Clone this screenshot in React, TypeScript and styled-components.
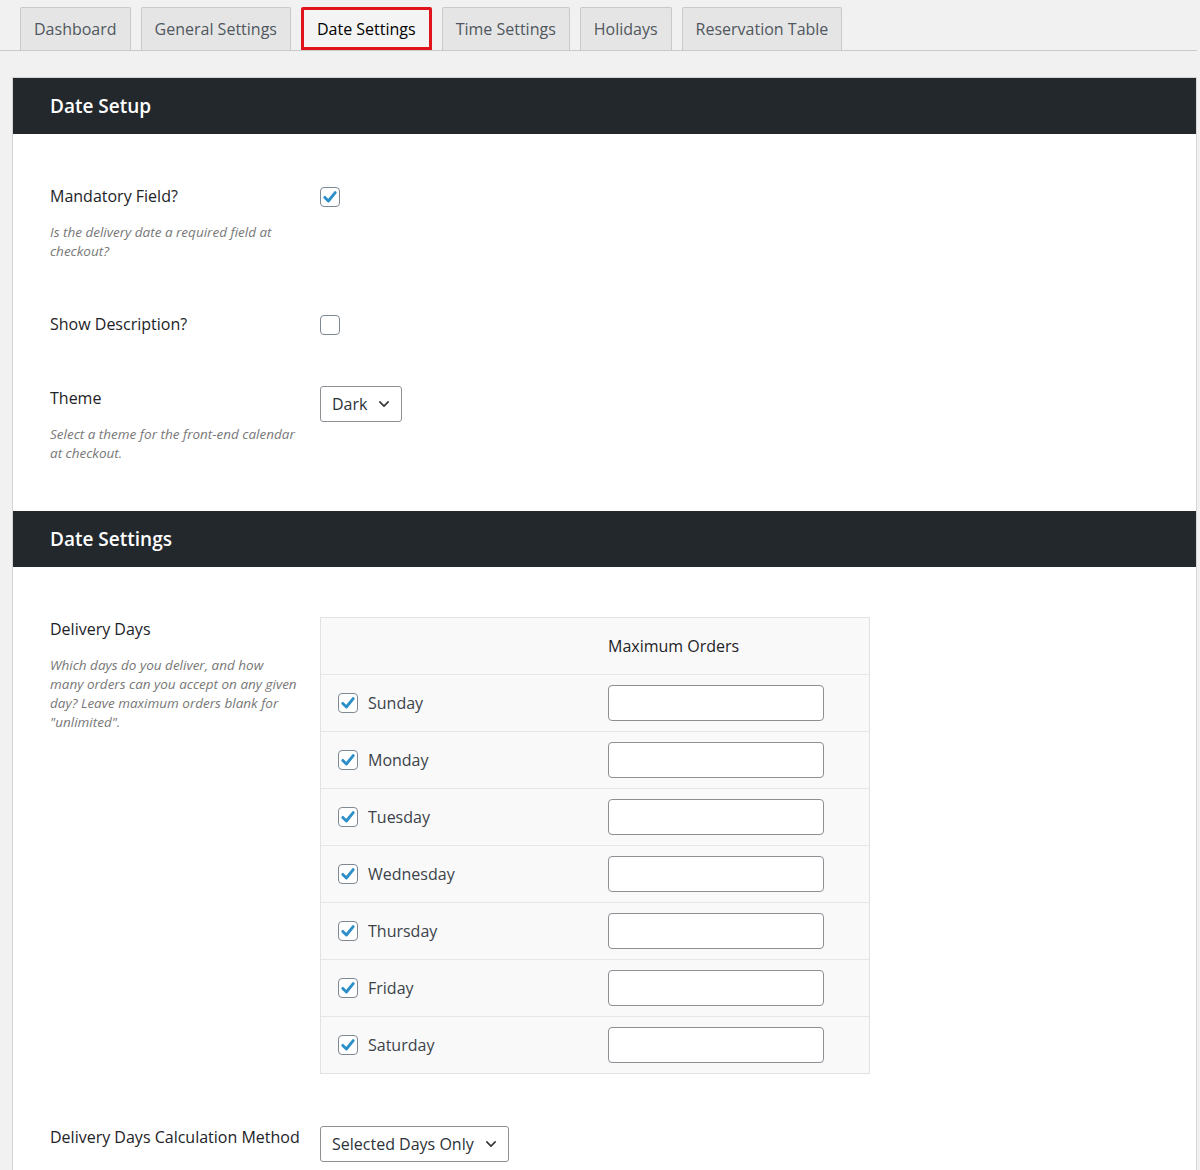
import React from "react";
import styled, { createGlobalStyle } from "styled-components";

const GlobalStyle = createGlobalStyle`
  body {
    margin: 0;
    background: #f1f1f1;
    font-family: "Open Sans", "Noto Sans", sans-serif;
    color: #23282d;
  }
`;

const tabs = ["Dashboard", "General Settings", "Date Settings", "Time Settings", "Holidays", "Reservation Table"];
const days = ["Sunday", "Monday", "Tuesday", "Wednesday", "Thursday", "Friday", "Saturday"];

const Check: React.FC<{ checked?: boolean; size?: number }> = ({ checked, size = 20 }) => (
  <CheckBox $size={size}>
    {checked && (
      <svg width={size - 4} height={size - 4} viewBox="0 0 20 20">
        <path d="M3.5 10.5 L8 15 L16.5 4.5" fill="none" stroke="#2c8fc7" strokeWidth="3.6" strokeLinecap="round" strokeLinejoin="round" />
      </svg>
    )}
  </CheckBox>
);

const Chevron = () => (
  <svg width="14" height="14" viewBox="0 0 20 20">
    <path d="M4 7 L10 13 L16 7" fill="none" stroke="#333" strokeWidth="2.2" strokeLinecap="round" strokeLinejoin="round" />
  </svg>
);

const App: React.FC = () => (
  <>
    <GlobalStyle />
    <TabBar>
      {tabs.map((t) => (
        <Tab key={t} $active={t === "Date Settings"}>{t}</Tab>
      ))}
    </TabBar>
    <Panel>
      <Header>Date Setup</Header>
      <Section>
        <Row>
          <LabelCol>
            <Label>Mandatory Field?</Label>
            <Desc>Is the delivery date a required field at checkout?</Desc>
          </LabelCol>
          <Control $offset={2}><Check checked /></Control>
        </Row>
        <Row>
          <LabelCol><Label>Show Description?</Label></LabelCol>
          <Control $offset={2}><Check /></Control>
        </Row>
        <Row>
          <LabelCol>
            <Label>Theme</Label>
            <Desc>Select a theme for the front-end calendar at checkout.</Desc>
          </LabelCol>
          <Control $offset={-1}><Select>Dark <Chevron /></Select></Control>
        </Row>
      </Section>
      <Header>Date Settings</Header>
      <Section>
        <Row>
          <LabelCol>
            <Label>Delivery Days</Label>
            <Desc>Which days do you deliver, and how many orders can you accept on any given day? Leave maximum orders blank for "unlimited".</Desc>
          </LabelCol>
          <Control $offset={-1}>
            <DaysTable>
              <TableHead>
                <span />
                <HeadCell>Maximum Orders</HeadCell>
              </TableHead>
              {days.map((d) => (
                <DayRow key={d}>
                  <DayName><Check checked />{d}</DayName>
                  <NumInput />
                </DayRow>
              ))}
            </DaysTable>
          </Control>
        </Row>
        <Row>
          <LabelCol><Label>Delivery Days Calculation Method</Label></LabelCol>
          <Control $offset={0}><Select>Selected Days Only <Chevron /></Select></Control>
        </Row>
      </Section>
    </Panel>
  </>
);

const TabBar = styled.div`
  display: flex;
  gap: 10px;
  padding: 7px 0 0 20px;
  margin-right: 3px;
  border-bottom: 1px solid #c9c9c9;
`;

const Tab = styled.div<{ $active?: boolean }>`
  height: 43px;
  box-sizing: border-box;
  padding: 0 13px;
  display: flex;
  align-items: center;
  font-size: 16px;
  color: ${(p) => (p.$active ? "#000" : "#50575e")};
  background: ${(p) => (p.$active ? "#f4f4f4" : "#e5e5e5")};
  border: ${(p) => (p.$active ? "3px solid #e0141c" : "1px solid #c9c9c9")};
  border-bottom: ${(p) => (p.$active ? "3px solid #e0141c" : "none")};
  border-radius: 2px 2px 0 0;
  margin-bottom: ${(p) => (p.$active ? "-1px" : "0")};
`;

const Panel = styled.div`
  margin: 26px 3px 0 12px;
  background: #fff;
  border: 1px solid #d5d5d5;
  border-bottom: none;
`;

const Header = styled.div`
  background: #23282d;
  color: #fff;
  height: 56px;
  display: flex;
  align-items: center;
  padding-left: 37px;
  font-size: 19px;
  font-weight: 600;
`;

const Section = styled.div`
  padding: 51px 0 48px 37px;
  display: flex;
  flex-direction: column;
  gap: 52px;
`;

const Row = styled.div`
  display: flex;
`;

const LabelCol = styled.div`
  width: 270px;
  flex-shrink: 0;
`;

const Label = styled.div`
  font-size: 16px;
  font-weight: 500;
  line-height: 22px;
  color: #1d2327;
  padding-right: 20px;
`;

const Desc = styled.div`
  margin-top: 16px;
  font-size: 13.5px;
  font-style: italic;
  color: #777;
  line-height: 19px;
  padding-right: 22px;
`;

const Control = styled.div<{ $offset?: number }>`
  margin-top: ${(p) => p.$offset ?? 0}px;
`;

const CheckBox = styled.div<{ $size: number }>`
  width: ${(p) => p.$size}px;
  height: ${(p) => p.$size}px;
  box-sizing: border-box;
  border: 1.5px solid #7e8993;
  border-radius: 4px;
  background: #fff;
  display: flex;
  align-items: center;
  justify-content: center;
  flex-shrink: 0;
`;

const Select = styled.div`
  display: inline-flex;
  align-items: center;
  gap: 10px;
  height: 36px;
  box-sizing: border-box;
  padding: 0 10px 0 11px;
  border: 1px solid #8c8f94;
  border-radius: 3px;
  font-size: 16px;
  color: #2c3338;
  background: #fff;
`;

const DaysTable = styled.div`
  width: 548px;
  background: #f9f9f9;
  border: 1px solid #e2e2e2;
`;

const TableHead = styled.div`
  display: grid;
  grid-template-columns: 287px 1fr;
  height: 56px;
  align-items: center;
  border-bottom: 1px solid #e6e6e6;
`;

const HeadCell = styled.div`
  font-size: 16px;
  font-weight: 500;
  color: #1d2327;
`;

const DayRow = styled.div`
  display: grid;
  grid-template-columns: 287px 216px;
  height: 56px;
  align-items: center;
  border-bottom: 1px solid #e6e6e6;
  &:last-child {
    border-bottom: none;
  }
`;

const DayName = styled.div`
  display: flex;
  align-items: center;
  gap: 10px;
  padding-left: 17px;
  font-size: 16px;
  color: #3c434a;
`;

const NumInput = styled.input`
  height: 36px;
  box-sizing: border-box;
  border: 1px solid #8c8f94;
  border-radius: 4px;
  background: #fff;
`;

export default App;
